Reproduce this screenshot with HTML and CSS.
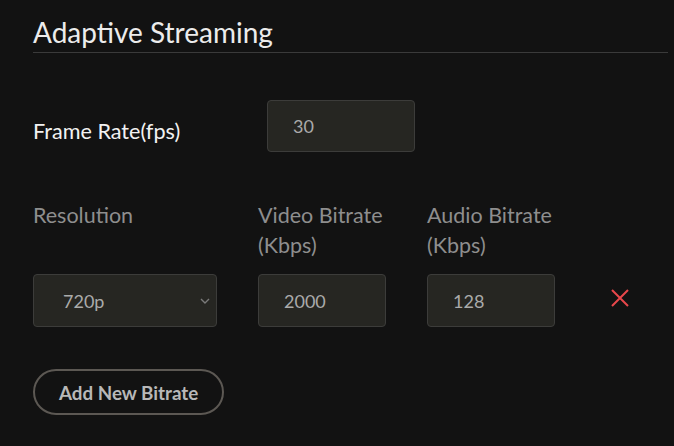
FILE: index.html
```html
<!DOCTYPE html>
<html lang="en">
<head>
  <meta charset="UTF-8">
  <title>Adaptive Streaming</title>
  <link rel="stylesheet" href="styles.css">
</head>
<body>
  <div class="panel">
    <h2 class="panel-title">Adaptive Streaming</h2>

    <div class="frame-row">
      <label class="frame-label" for="fps">Frame Rate(fps)</label>
      <input class="field field-fps" type="text" id="fps" value="30">
    </div>

    <div class="bitrates">
      <div class="col-label">Resolution</div>
      <div class="col-label">Video Bitrate (Kbps)</div>
      <div class="col-label">Audio Bitrate (Kbps)</div>
      <div></div>

      <div class="select-wrap">
        <select class="field field-select">
          <option>720p</option>
          <option>1080p</option>
          <option>480p</option>
        </select>
        <svg class="chevron" width="10" height="6" viewBox="0 0 10 6">
          <path d="M1 1 L5 5 L9 1" fill="none" stroke="#7a7a7a" stroke-width="1.4"/>
        </svg>
      </div>
      <input class="field" type="text" value="2000">
      <input class="field" type="text" value="128">
      <button class="remove" title="Remove">
        <svg width="18" height="18" viewBox="0 0 18 18">
          <path d="M1 1 L17 17 M17 1 L1 17" stroke="#e8474b" stroke-width="2"/>
        </svg>
      </button>
    </div>

    <button class="add-btn">Add New Bitrate</button>
  </div>
</body>
</html>
```

FILE: styles.css
```css
body {
  margin: 0;
  background-color: #121212;
  font-family: Lato, "Open Sans", sans-serif;
}
.panel {
  padding: 15px 6px 0 33px;
}
.panel-title {
  margin: 0;
  font-size: 28px;
  font-weight: 400;
  line-height: 34px;
  color: #ececec;
  padding-bottom: 3px;
  border-bottom: 1px solid #3a3a3a;
}
.frame-row {
  display: flex;
  align-items: center;
  margin-top: 47px;
}
.frame-label {
  width: 234px;
  margin-top: 10px;
  font-size: 21.6px;
  color: #f2f2f2;
}
.field {
  box-sizing: border-box;
  height: 53px;
  padding: 0 0 0 25px;
  background-color: #262622;
  border: 1px solid #3c3c3a;
  border-radius: 4px;
  color: #aaaaaa;
  font-family: Lato, sans-serif;
  font-size: 18px;
  outline: none;
}
.field-fps {
  width: 148px;
  height: 52px;
}
.bitrates {
  display: grid;
  grid-template-columns: 184px 128px 128px auto;
  column-gap: 41px;
  row-gap: 14px;
  margin-top: 48px;
  align-items: center;
}
.col-label {
  align-self: start;
  font-size: 21.5px;
  line-height: 30px;
  color: #8e8e8e;
}
.bitrates .field {
  width: 100%;
}
.select-wrap {
  position: relative;
}
.field-select {
  appearance: none;
  -webkit-appearance: none;
  padding-left: 29px;
}
.chevron {
  position: absolute;
  right: 7px;
  top: 24px;
}
.remove {
  justify-self: start;
  margin: 0 0 6px 15px;
  padding: 0;
  background: none;
  border: none;
  line-height: 0;
  cursor: pointer;
}
.add-btn {
  margin-top: 42px;
  height: 46px;
  padding: 0 24px;
  background: none;
  border: 2px solid #5c5853;
  border-radius: 23px;
  color: #b8b8b8;
  font-family: Lato, sans-serif;
  font-size: 18.8px;
  font-weight: 700;
  cursor: pointer;
}
```
